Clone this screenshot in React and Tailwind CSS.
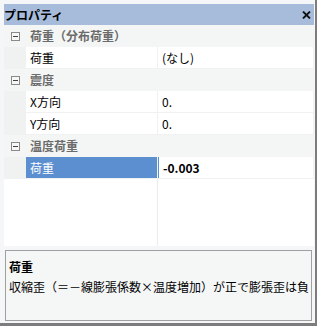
import React from "react";

const font = { fontFamily: '"Noto Sans CJK JP", "Noto Sans", sans-serif' };

const rows = [
  { type: "cat", label: "荷重（分布荷重）" },
  { type: "item", name: "荷重", value: "(なし)" },
  { type: "cat", label: "震度" },
  { type: "item", name: "X方向", value: "0." },
  { type: "item", name: "Y方向", value: "0." },
  { type: "cat", label: "温度荷重" },
  { type: "item", name: "荷重", value: "-0.003", selected: true },
];

// collapse box drawn like the WinForms property grid
const Minus = () => (
  <svg width="9" height="9" viewBox="0 0 9 9" className="shrink-0">
    <rect x="0.5" y="0.5" width="8" height="8" fill="#f7f7f7" stroke="#8a8a8a" />
    <line x1="2" y1="4.5" x2="7" y2="4.5" stroke="#444" />
  </svg>
);

const CategoryRow = ({ label }) => (
  <div className="h-[22px] bg-[#f4f6f6] flex items-center pl-[7px]">
    <Minus />
    <span className="ml-[10px] text-[12px] font-bold text-[#6b6b6b] leading-none whitespace-nowrap">{label}</span>
  </div>
);

const ItemRow = ({ name, value, selected }) => (
  <div className="h-[22px] bg-[#f0f2f2] flex pl-[22px] pr-px">
    <div
      className={`w-[131px] h-[21px] flex items-center pl-[4px] text-[12px] leading-none ${
        selected ? "bg-[#5b8fd0] text-white" : "bg-white text-black"
      }`}
    >
      {name}
    </div>
    <div
      className={`flex-1 ml-px h-[21px] bg-white flex items-center pl-[4px] text-[12px] leading-none text-black ${
        selected ? "font-bold border-l border-[#5b8fd0]" : ""
      }`}
    >
      {value}
    </div>
  </div>
);

export default function App() {
  return (
    <div
      className="w-[317px] h-[326px] bg-[#f5f6f7] border-r-2 border-b-[3px] border-[#7c7c7c] pt-[4px] pl-[4px] pr-px pb-[2px] flex flex-col"
      style={font}
    >
      {/* title bar */}
      <div className="h-[21px] bg-[#a6bcda] flex items-center justify-between">
        <span className="text-[12px] font-bold text-black leading-none">プロパティ</span>
        <svg width="9" height="8" viewBox="0 0 9 8" className="mr-[3px]">
          <path d="M1 0.5 L8 7.5 M8 0.5 L1 7.5" stroke="#111" strokeWidth="1.8" />
        </svg>
      </div>

      {/* grid */}
      <div className="h-[221px] flex flex-col bg-white">
        {rows.map((r, i) =>
          r.type === "cat" ? (
            <CategoryRow key={i} label={r.label} />
          ) : (
            <ItemRow key={i} name={r.name} value={r.value} selected={r.selected} />
          )
        )}
        <div className="flex-1 flex">
          <div className="w-[153px] bg-white" />
          <div className="w-px bg-[#ececec]" />
          <div className="flex-1 bg-white" />
        </div>
      </div>

      {/* description */}
      <div className="mt-[4px] ml-px mr-[2px] h-[71px] border border-[#a0a0a0] bg-[#f5f7f7] px-[3px] pt-[6px]">
        <div className="text-[12px] font-bold text-black leading-[20px]">荷重</div>
        <div className="text-[12px] text-black leading-[20px] whitespace-nowrap">
          収縮歪（＝－線膨張係数×温度増加）が正で膨張歪は負
        </div>
      </div>
    </div>
  );
}
